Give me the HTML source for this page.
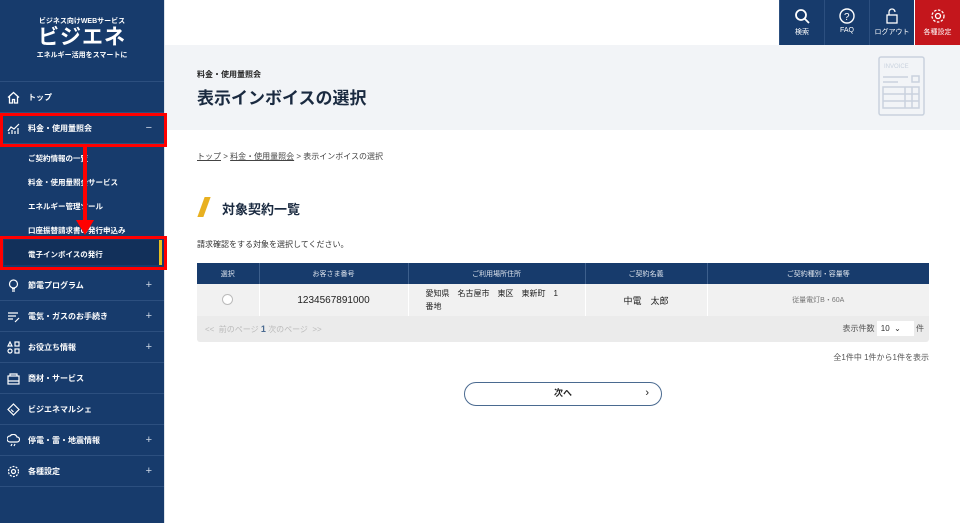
<!DOCTYPE html>
<html><head><meta charset="utf-8"><style>
*{margin:0;padding:0;box-sizing:border-box}
body{width:960px;height:523px;overflow:hidden;font-family:"Liberation Sans","Noto Sans CJK JP",sans-serif;background:#fff;position:relative;color:#222}
.sb{position:absolute;left:0;top:0;width:164px;height:523px;background:#173b6c;color:#fff}
.sb .logo{height:82px;border-bottom:1px solid #2c4f7f;text-align:center;padding-top:16px}
.it{position:absolute;left:0;width:164px;height:31px;border-bottom:1px solid #2c4f7f;font-size:8px;font-weight:bold;display:flex;align-items:center;padding-left:28px}
.it .ic{position:absolute;left:7px;top:9px;width:13px;height:13px}
.it .pl{position:absolute;right:12px;font-size:11px;font-weight:normal;color:#cfd8e6}
.sub{position:absolute;left:28px;font-size:7.5px;font-weight:bold}
.red{position:absolute;border:3px solid #f00}
.top{position:absolute;top:0;height:45px;width:45px;background:#173b6c;color:#fff;font-size:7px;text-align:center;border-left:1px solid #2c4f7f}
.top svg{display:block;margin:8px auto 3px}
table{border-collapse:collapse;position:absolute;left:197px;top:263px;width:732px;font-size:7px}
th{background:#173b6c;color:#dfe5ee;height:21px;font-weight:normal;border-left:1px solid #3d5f8c}
td{background:#f1f1f1;height:32px;text-align:center;border-left:1px solid #fff}
</style></head><body>
<div class="sb">
 <div class="logo">
  <div style="font-size:7px;font-weight:bold">ビジネス向けWEBサービス</div>
  <div style="font-size:21px;font-weight:bold;line-height:24px;letter-spacing:1px">ビジエネ</div>
  <div style="font-size:7px;font-weight:bold">エネルギー活用をスマートに</div>
 </div>
 <div class="it" style="top:82px"><svg class="ic" viewBox="0 0 13 13" fill="none" stroke="#fff" stroke-width="1.3"><path d="M1 6.5L6.5 1.5 12 6.5M2.5 5.5V12h3V8.5h2V12h3V5.5"/></svg>トップ</div>
 <div class="it" style="top:113px"><svg class="ic" viewBox="0 0 13 13" fill="none" stroke="#fff" stroke-width="1.2"><path d="M1 9L4 5 7 7 12 2M2 12v-2M5 12V8M8 12V9M11 12V6"/></svg>料金・使用量照会<span class="pl">−</span></div>
 <div style="position:absolute;top:144px;left:0;width:164px;height:121px;">
  <div class="sub" style="top:9px">ご契約情報の一覧</div>
  <div class="sub" style="top:33px">料金・使用量照会サービス</div>
  <div class="sub" style="top:57px">エネルギー管理ツール</div>
  <div class="sub" style="top:81px">口座振替請求書の発行申込み</div>
  <div style="position:absolute;top:96px;left:4px;width:158px;height:25px;background:#12305a;border-right:3px solid #e8c020"></div>
  <div class="sub" style="top:105px">電子インボイスの発行</div>
 </div>
 <div class="it" style="top:270px"><svg class="ic" viewBox="0 0 13 13" fill="none" stroke="#fff" stroke-width="1.2"><circle cx="6.5" cy="5" r="4"/><path d="M5 10h3M5 12h3"/></svg>節電プログラム<span class="pl">+</span></div>
 <div class="it" style="top:301px"><svg class="ic" viewBox="0 0 13 13" fill="none" stroke="#fff" stroke-width="1.2"><path d="M1 3h10M1 6h8M1 9h5M8 12l4-4"/></svg>電気・ガスのお手続き<span class="pl">+</span></div>
 <div class="it" style="top:332px"><svg class="ic" viewBox="0 0 13 13" fill="none" stroke="#fff" stroke-width="1.2"><path d="M3 1L5 5H1z"/><rect x="8" y="1" width="4" height="4"/><circle cx="3" cy="10" r="2"/><rect x="8" y="8" width="4" height="4"/></svg>お役立ち情報<span class="pl">+</span></div>
 <div class="it" style="top:363px"><svg class="ic" viewBox="0 0 13 13" fill="none" stroke="#fff" stroke-width="1.2"><rect x="1" y="4" width="11" height="8"/><path d="M3 4V2h7v2M1 9h11"/></svg>商材・サービス</div>
 <div class="it" style="top:394px"><svg class="ic" viewBox="0 0 13 13" fill="none" stroke="#fff" stroke-width="1.2"><path d="M6.5 1L12 6.5 6.5 12 1 6.5z"/><path d="M4 6.5l2.5 2.5"/></svg>ビジエネマルシェ</div>
 <div class="it" style="top:425px"><svg class="ic" viewBox="0 0 13 13" fill="none" stroke="#fff" stroke-width="1.2"><path d="M3 8a3 3 0 010-6 4 4 0 017 1 2.5 2.5 0 010 5z"/><path d="M5 10l-1 2M8 10l-1 2"/></svg>停電・雷・地震情報<span class="pl">+</span></div>
 <div class="it" style="top:456px"><svg class="ic" viewBox="0 0 13 13" fill="none" stroke="#fff" stroke-width="1.2"><circle cx="6.5" cy="6.5" r="2"/><circle cx="6.5" cy="6.5" r="5" stroke-dasharray="2 1.2"/></svg>各種設定<span class="pl">+</span></div>
</div>
<div style="position:absolute;left:164px;top:0;width:1px;height:523px;background:#dde3ea"></div>
<div style="position:absolute;left:165px;top:45px;width:795px;height:85px;background:#f2f4f7"></div>
<div style="position:absolute;left:197px;top:69px;font-size:8px;font-weight:bold">料金・使用量照会</div>
<div style="position:absolute;left:197px;top:84px;font-size:17px;font-weight:bold;color:#1a2a40">表示インボイスの選択</div>
<svg style="position:absolute;left:878px;top:56px" width="47" height="60" viewBox="0 0 47 60" fill="none" stroke="#c9d2de" stroke-width="1.5"><rect x="1" y="1" width="45" height="58" rx="2"/><text x="6" y="12" font-size="6" fill="#c9d2de" stroke="none" font-family="Liberation Sans">INVOICE</text><path d="M5 21h25M5 26h15"/><rect x="34" y="20" width="7" height="6"/><rect x="5" y="31" width="36" height="21"/><path d="M5 38h36M5 45h36M27 31v21M34 31v21"/></svg>
<div class="top" style="left:779px"><svg width="16" height="16" viewBox="0 0 16 16" fill="none" stroke="#fff" stroke-width="1.8"><circle cx="7" cy="7" r="5"/><path d="M11 11l4 4"/></svg>検索</div>
<div class="top" style="left:824px"><svg width="16" height="16" viewBox="0 0 16 16" fill="none" stroke="#fff" stroke-width="1.4"><circle cx="8" cy="8" r="7"/><text x="5" y="12" font-size="10" fill="#fff" stroke="none" font-family="Liberation Sans">?</text></svg>FAQ</div>
<div class="top" style="left:869px"><svg width="16" height="16" viewBox="0 0 16 16" fill="none" stroke="#fff" stroke-width="1.3"><rect x="3" y="7" width="10" height="8"/><path d="M5 7V4a3 3 0 016 0"/></svg>ログアウト</div>
<div class="top" style="left:915px;background:#c4161c;border:none"><svg width="16" height="16" viewBox="0 0 16 16" fill="none" stroke="#fff" stroke-width="1.3"><circle cx="8" cy="8" r="2.5"/><circle cx="8" cy="8" r="6" stroke-dasharray="2.5 1.5"/></svg>各種設定</div>
<div style="position:absolute;left:197px;top:151px;font-size:8px;color:#444"><u>トップ</u> &gt; <u>料金・使用量照会</u> &gt; 表示インボイスの選択</div>
<div style="position:absolute;left:201px;top:197px;width:6px;height:20px;background:#e8b020;transform:skewX(-20deg)"></div>
<div style="position:absolute;left:222px;top:199px;font-size:13px;font-weight:bold;color:#1a2a40">対象契約一覧</div>
<div style="position:absolute;left:197px;top:239px;font-size:8px;color:#333">請求確認をする対象を選択してください。</div>
<table>
<tr><th style="width:62px;border-left:none">選択</th><th style="width:149px">お客さま番号</th><th style="width:177px">ご利用場所住所</th><th style="width:122px">ご契約名義</th><th>ご契約種別・容量等</th></tr>
<tr><td style="border:none"><span style="display:inline-block;width:11px;height:11px;border:1px solid #bbb;border-radius:50%;background:#fff"></span></td><td style="font-size:10px">1234567891000</td><td style="text-align:left;padding-left:17px;font-size:8px;line-height:13px">愛知県　名古屋市　東区　東新町　1<br>番地</td><td style="font-size:9px">中電　太郎</td><td style="color:#777">従量電灯B・60A</td></tr>
</table>
<div style="position:absolute;left:197px;top:316px;width:732px;height:26px;background:#ebebeb;border-radius:0 0 3px 3px;font-size:8px;color:#bbb;padding:8px 0 0 8px">&lt;&lt;&nbsp; 前のページ <b style="color:#4a6a90;font-size:9px">1</b> 次のページ &nbsp;&gt;&gt;
<span style="position:absolute;right:5px;top:5px;color:#555">表示件数 <span style="display:inline-block;background:#fff;width:37px;height:15px;padding:3px 4px;color:#333">10 &nbsp;⌄</span> 件</span></div>
<div style="position:absolute;right:31px;top:352px;font-size:8px;color:#555">全1件中 1件から1件を表示</div>
<div style="position:absolute;left:464px;top:382px;width:198px;height:24px;border:1.5px solid #4a6a90;border-radius:12px;font-size:9px;font-weight:bold;text-align:center;line-height:21px">次へ<span style="position:absolute;right:12px;font-weight:normal;font-size:11px">›</span></div>
<div class="red" style="left:0;top:113px;width:167px;height:34px"></div>
<div class="red" style="left:0;top:236px;width:167px;height:34px"></div>
<div style="position:absolute;left:83px;top:146px;width:4px;height:76px;background:#f00"></div>
<div style="position:absolute;left:76px;top:220px;border-left:9px solid transparent;border-right:9px solid transparent;border-top:15px solid #f00"></div>
</body></html>
